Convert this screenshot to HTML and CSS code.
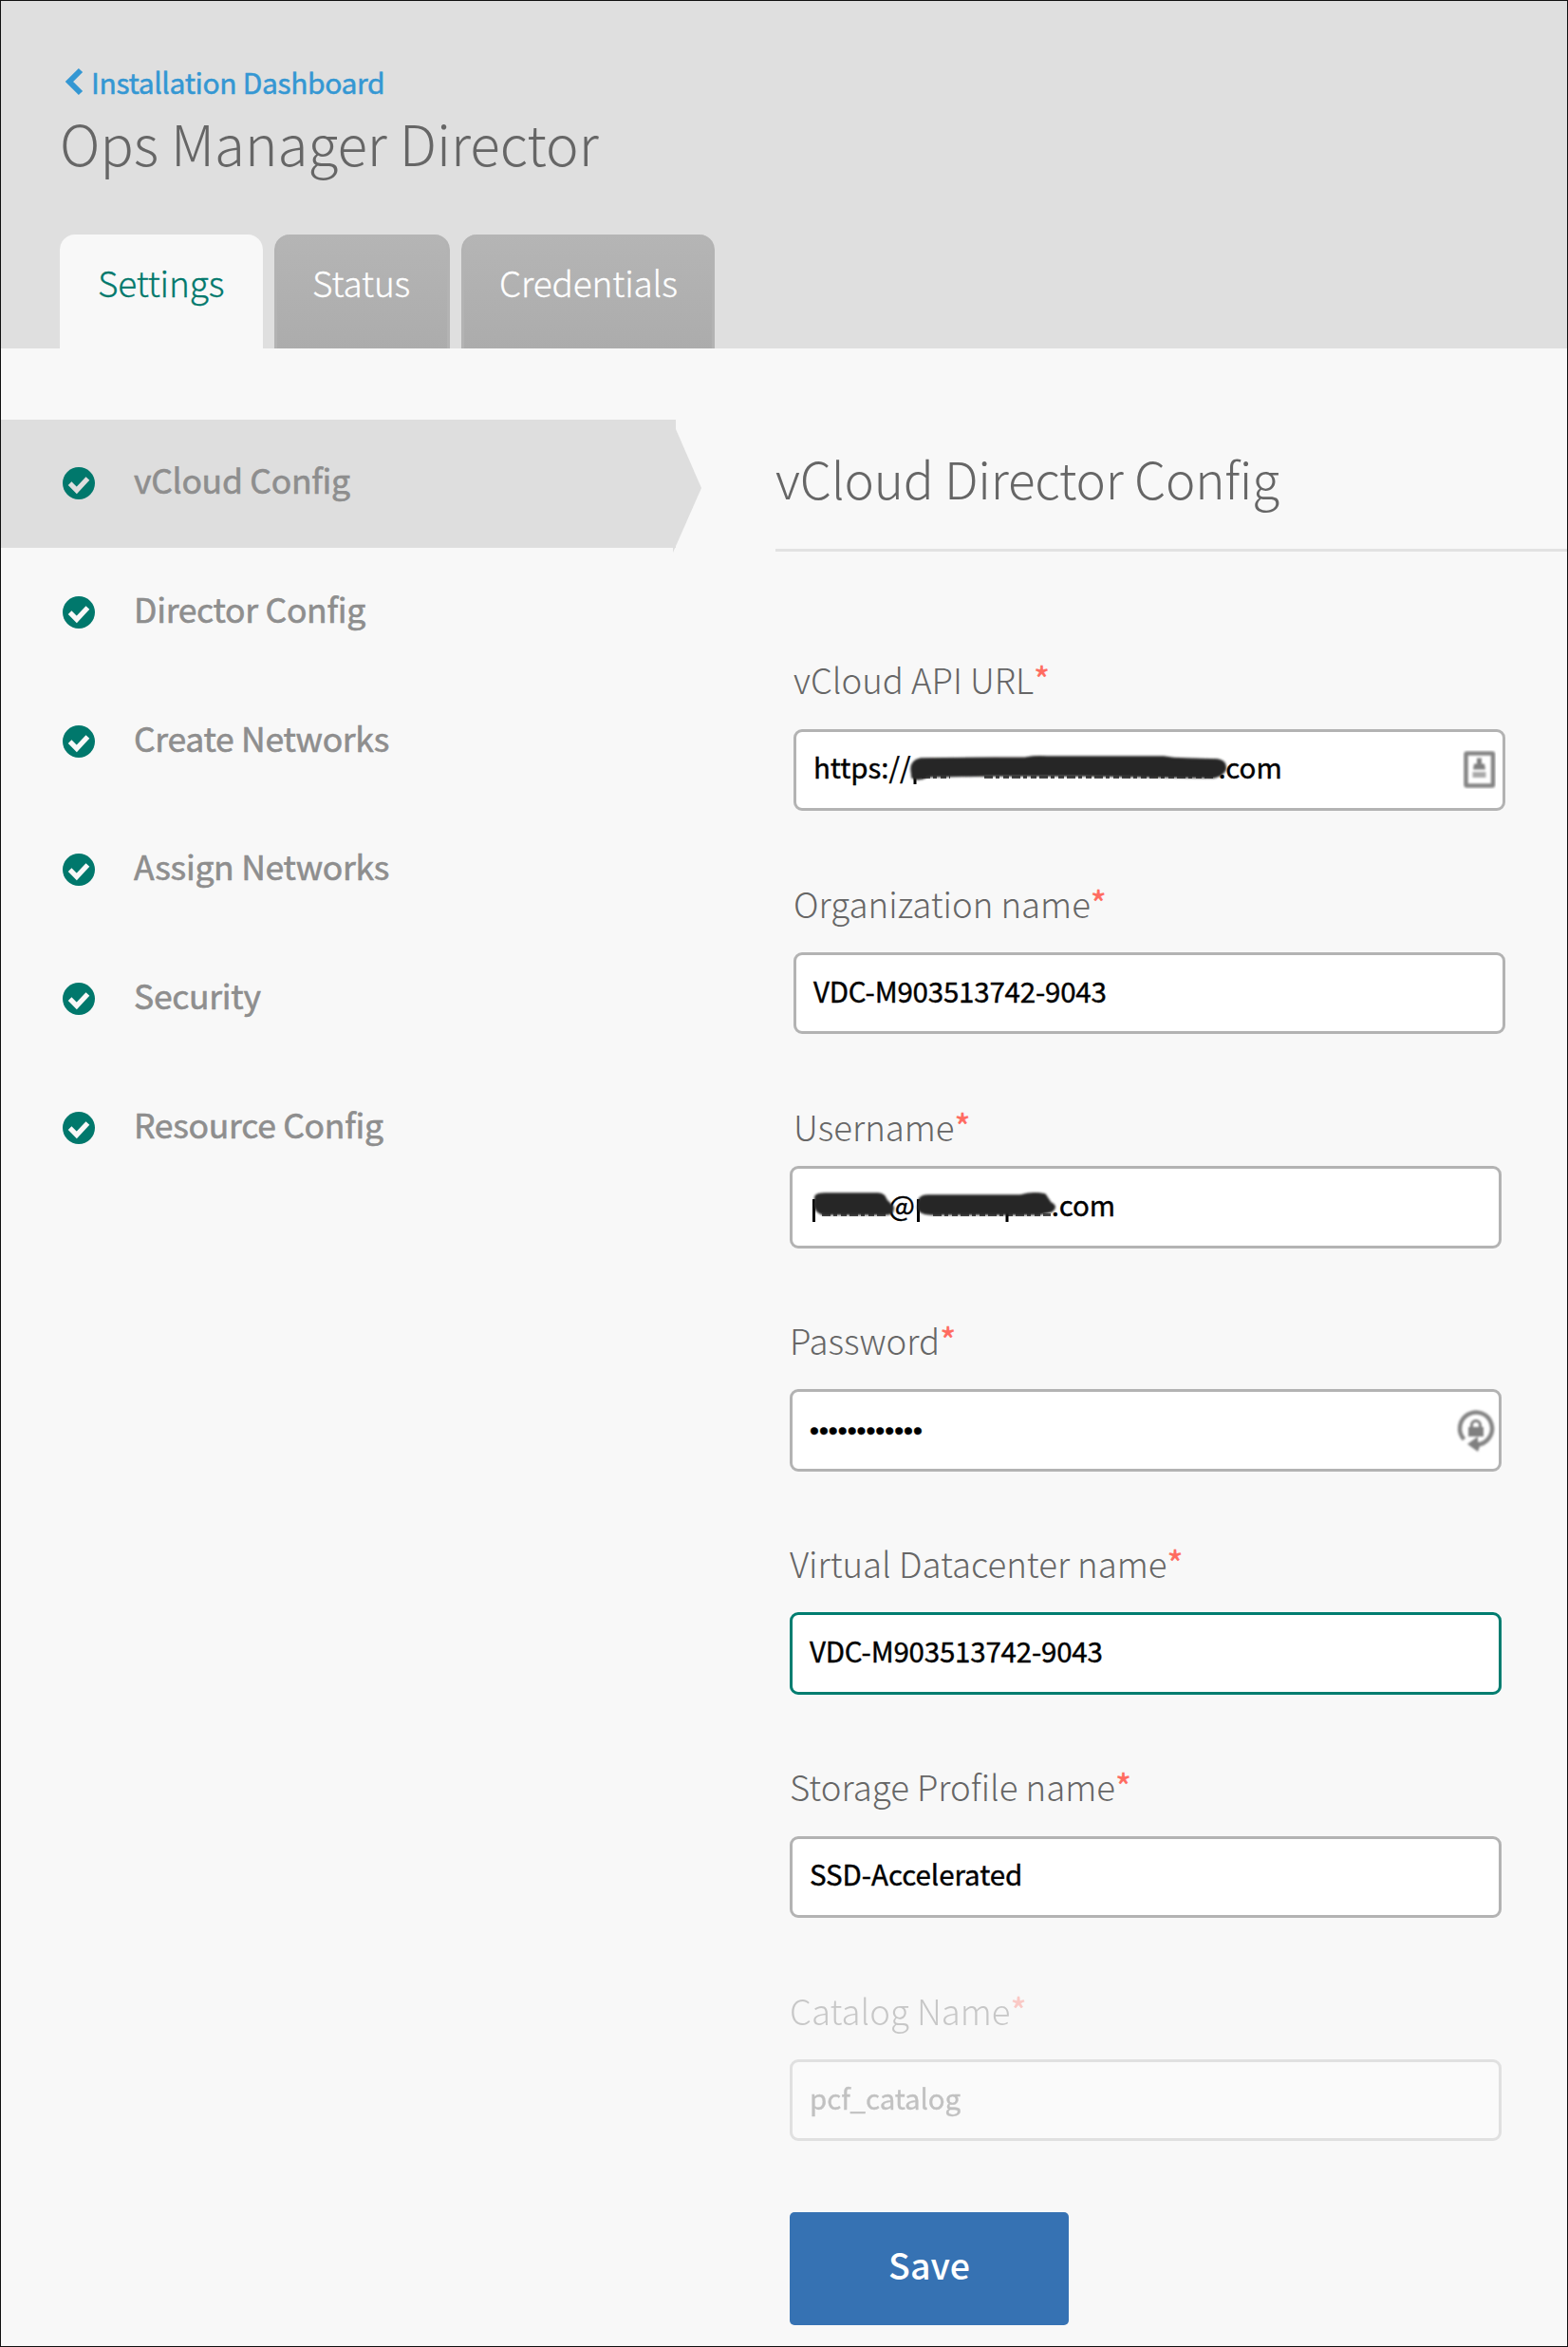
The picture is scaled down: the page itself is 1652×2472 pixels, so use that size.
FILE: index.html
```html
<!DOCTYPE html>
<html lang="en">
<head>
<meta charset="utf-8">
<title>Ops Manager Director</title>
<link rel="stylesheet" href="styles.css">
</head>
<body>
<svg width="0" height="0" class="defs">
  <filter id="soft"><feGaussianBlur stdDeviation="0.9"/></filter>
  <symbol id="check" viewBox="0 0 34 34"><circle cx="17" cy="17" r="17" fill="#00786c"/><path d="M7.6 17.2l7.2 7.2 11.6-12.4" fill="none" stroke="currentColor" stroke-width="5.2"/></symbol>
</svg>
<div class="page">
  <header class="header">
    <a class="back"><svg class="chevron" width="20" height="30" viewBox="0 0 20 30"><path d="M17 3L5 15l12 12" fill="none" stroke="#3497d3" stroke-width="6"/></svg><span>Installation Dashboard</span></a>
    <h1 class="title">Ops Manager Director</h1>
    <nav class="tabs">
      <a class="tab tab-active tab-settings">Settings</a>
      <a class="tab tab-status">Status</a>
      <a class="tab tab-credentials">Credentials</a>
    </nav>
  </header>
  <div class="body">
    <nav class="side">
      <a class="item item-active"><svg class="check"><use href="#check"/></svg><span>vCloud Config</span><svg class="arrow" width="30" height="130" viewBox="0 0 30 130"><path d="M0 0H3L30 62L0 130Z" fill="#dedede"/></svg></a>
      <a class="item"><svg class="check"><use href="#check"/></svg><span>Director Config</span></a>
      <a class="item"><svg class="check"><use href="#check"/></svg><span>Create Networks</span></a>
      <a class="item"><svg class="check"><use href="#check"/></svg><span>Assign Networks</span></a>
      <a class="item"><svg class="check"><use href="#check"/></svg><span>Security</span></a>
      <a class="item"><svg class="check"><use href="#check"/></svg><span>Resource Config</span></a>
    </nav>
    <main class="main">
      <h2 class="heading">vCloud Director Config</h2>
      <form class="form">
        <div class="field field-api">
          <label class="label">vCloud API URL<span class="req">*</span></label>
          <div class="input"><span>https://</span><span class="hidden-host"></span><span>.com</span>
            <svg class="scribble" width="360" height="70" viewBox="0 0 360 70">
              <path d="M123 40V55" stroke="#000" stroke-width="3"/>
              <path d="M130 47.500H160M196 47.500H440" stroke="#000" stroke-width="3" stroke-dasharray="9 3 4 4 6 3" opacity=".7"/>
              <path class="ink" filter="url(#soft)" d="M119 39Q119 30 129 28L240 27Q250 25 262 26L385 26Q395 28 408 28L442 29Q452 31 450 40Q447 46 438 48L300 46L200 46L136 47Q126 52 120 48Z"/>
            </svg>
            <svg class="contact" width="36" height="42" viewBox="0 0 36 42"><g filter="url(#soft)"><rect x="3.5" y="3.5" width="28.500" height="34" rx="1" fill="none" stroke="#858585" stroke-width="4.500"/><path d="M15 8.500h5v6h3l1 6H11l1-6h3z" fill="#808080"/><path d="M10.500 23h14v6h-14z" fill="#aaa"/></g></svg>
          </div>
        </div>
        <div class="field field-org">
          <label class="label">Organization name<span class="req">*</span></label>
          <div class="input digits">VDC-M903513742-9043</div>
        </div>
        <div class="field field-user">
          <label class="label">Username<span class="req">*</span></label>
          <div class="input"><span class="hidden-user"></span><span>@</span><span class="hidden-domain"></span><span>.com</span>
            <svg class="scribble" width="360" height="70" viewBox="0 0 360 70">
              <path d="M20.500 32V56M130.500 32V56M224 40V56" stroke="#000" stroke-width="3"/>
              <path d="M29 48.500H98M146 48.500H270" stroke="#000" stroke-width="3" stroke-dasharray="9 3 4 4 6 3" opacity=".7"/>
              <path class="ink" filter="url(#soft)" d="M22 29Q24 26 32 26H88Q95 26 97 33L104 40Q105 48 97 48H30Q22 46 21 38Z"/>
              <path class="ink" filter="url(#soft)" d="M131 33Q133 28 141 28H238Q252 24 264 27L270 36Q278 40 271 45L258 48H143Q133 48 130 42Z"/>
            </svg>
          </div>
        </div>
        <div class="field">
          <label class="label">Password<span class="req">*</span></label>
          <div class="input password">••••••••••••
            <svg class="lock" width="42" height="48" viewBox="0 0 42 48"><g filter="url(#soft)"><path d="M8.500 33A17 17 0 1 1 22 38.500" fill="none" stroke="#858585" stroke-width="4.500"/><path d="M12 38l11-8v4.500l2 6L23 46z" fill="#808080"/><path d="M13 20h16v10H13z" fill="#808080"/><path d="M16.500 21v-3a4.500 4.500 0 0 1 9 0v3" fill="none" stroke="#808080" stroke-width="3"/></g></svg>
          </div>
        </div>
        <div class="field">
          <label class="label">Virtual Datacenter name<span class="req">*</span></label>
          <div class="input digits focused">VDC-M903513742-9043</div>
        </div>
        <div class="field field-storage">
          <label class="label">Storage Profile name<span class="req">*</span></label>
          <div class="input">SSD-Accelerated</div>
        </div>
        <div class="field field-catalog">
          <label class="label">Catalog Name<span class="req">*</span></label>
          <div class="input">pcf_catalog</div>
        </div>
        <button class="save" type="button">Save</button>
      </form>
    </main>
  </div>
</div>
</body>
</html>
```
FILE: styles.css
```css
* { box-sizing: border-box; }
body { margin: 0; font-family: "Noto Sans CJK SC", sans-serif; background: #f8f8f8; }
.defs { position: absolute; }
.page { width: 1652px; height: 2472px; border: 1px solid #111; overflow: hidden; }

.header { height: 366px; background: #dfdfdf; padding: 65px 0 0 62px; }
.back { display: flex; font-size: 30px; line-height: 40px; letter-spacing: -0.35px; color: #3497d3; padding-left: 5px; -webkit-text-stroke: 0.5px; }
.chevron { margin: 5px 8px 0 0; }
.title { margin: 4px 0 0; font-size: 58.4px; line-height: 80px; font-weight: 300; color: #666; }
.tabs { display: flex; gap: 12px; margin-top: 57px; }
.tab { height: 120px; padding: 20px 0 0 37px; font-size: 37px; line-height: 60px; letter-spacing: -0.15px; font-weight: 300; color: #fff; background: linear-gradient(#b5b5b5, #acacac); border: solid #b3b3b3; border-width: 0 3px; border-radius: 16px 16px 0 0; -webkit-text-stroke: 0.3px; }
.tab-settings { width: 214px; }
.tab-status { width: 185px; }
.tab-credentials { width: 267px; }
.tab-active { background: #f8f8f8; border-color: #f8f8f8; color: #00786c; }

.body { display: flex; padding-top: 75px; }
.side { width: 711px; }
.item { position: relative; display: flex; height: 135px; margin-bottom: 0.75px; font-size: 35.5px; line-height: 126px; letter-spacing: -0.28px; color: #8e8e8e; padding-left: 65px; -webkit-text-stroke: 0.6px; }
.item-active { background: #dedede; }
.check { width: 34px; height: 34px; margin: 50px 41px 0 0; color: #f8f8f8; -webkit-text-stroke: 0; }
.item-active .check { color: #dedede; }
.arrow { position: absolute; left: 708px; top: 10px; }

.main { flex: 1; }
.heading { margin: 0 0 0 105px; padding-bottom: 13px; font-size: 53px; letter-spacing: -0.25px; font-weight: 300; line-height: 123px; color: #666; border-bottom: 3px solid #e2e2e2; }
.form { padding: 109px 0 0 120px; }
.field { margin-bottom: 71px; width: 750px; }
.label { display: block; height: 50px; font-size: 36.6px; line-height: 52px; font-weight: 300; color: #666; margin-bottom: 27px; }
.req { color: #ff6b60; font-weight: 400; position: relative; top: -1px; -webkit-text-stroke: 0.4px; }
.input { position: relative; display: flex; height: 87px; border: 3px solid #b3b3b3; border-radius: 9px; background: #fff; font-size: 29.5px; line-height: 75px; letter-spacing: -0.05px; padding-left: 18px; color: #000; -webkit-text-stroke: 0.4px; }
.digits { letter-spacing: -0.2px; }
.focused { border-color: #007d70; }
.password { font-family: "Liberation Sans", sans-serif; font-size: 28.3px; line-height: 81px; letter-spacing: 0; }

.field-api, .field-org { margin-left: 4px; margin-bottom: 72px; }
.field-api .input, .field-org .input { height: 86px; }
.field-api .label { margin-bottom: 28px; }
.field-user .label { margin: 0 0 17px 4px; }
.field-storage { margin-bottom: 72px; }
.field-storage .label { margin-bottom: 28px; }
.field-storage .input, .field-catalog .input { height: 86px; }
.field-storage .input, .field-api .input { line-height: 73px; }
.field-catalog { opacity: 0.33; margin-bottom: 75px; }
.field-catalog .input { color: #555; border-color: #b0b0b0; }
.field-catalog .input { letter-spacing: -0.1px; }

.hidden-host { width: 324px; }
.hidden-user { width: 83px; }
.hidden-domain { width: 144px; }
.scribble { position: absolute; left: 2px; top: 0; overflow: visible; }
.ink { fill: #282726; stroke: #282726; stroke-width: 1.5; stroke-linejoin: round; }
.contact { position: absolute; right: 6px; top: 19px; }
.lock { position: absolute; right: 3px; top: 17px; }

.save { display: block; width: 294px; height: 119px; padding: 0 0 10px; font-family: inherit; background: #3672b3; color: #fff; border: 0; border-radius: 5px; font-size: 37.5px; font-weight: 500; }
```
